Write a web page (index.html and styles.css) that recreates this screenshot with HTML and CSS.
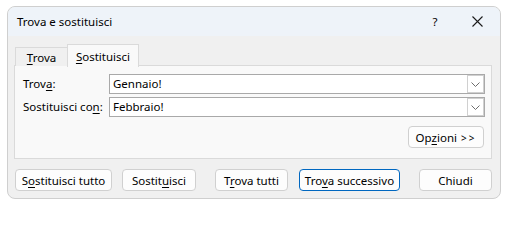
FILE: index.html
```html
<!DOCTYPE html>
<html lang="it">
<head>
<meta charset="utf-8">
<title>Trova e sostituisci</title>
<link rel="stylesheet" href="styles.css">
</head>
<body>
<div class="window">
  <div class="titlebar">
    <span class="title">Trova e sostituisci</span>
    <span class="help">?</span>
    <span class="close">
      <svg width="11" height="11" viewBox="0 0 11 11"><path d="M0.5 0.5 L10.5 10.5 M10.5 0.5 L0.5 10.5" stroke="#1b1b1b" stroke-width="1.1" fill="none"/></svg>
    </span>
  </div>
  <div class="content">
    <div class="tabs">
      <div class="tab"><span><u>T</u>rova</span></div>
      <div class="tab active"><span><u>S</u>ostituisci</span></div>
    </div>
    <div class="panel">
      <div class="form">
        <label class="label">Trov<u>a</u>:</label>
        <div class="combo"><span class="value">Gennaio!</span><span class="drop"><svg width="9" height="5" viewBox="0 0 9 5"><path d="M0.5 0.5 L4.5 4.5 L8.5 0.5" stroke="#6d6d6d" fill="none"/></svg></span></div>
        <label class="label">Sostituisci co<u>n</u>:</label>
        <div class="combo"><span class="value">Febbraio!</span><span class="drop"><svg width="9" height="5" viewBox="0 0 9 5"><path d="M0.5 0.5 L4.5 4.5 L8.5 0.5" stroke="#6d6d6d" fill="none"/></svg></span></div>
      </div>
      <div class="options-row">
        <button class="btn opt"><span>Op<u>z</u>ioni <span class="arrows">&gt;&gt;</span></span></button>
      </div>
    </div>
    <div class="buttons">
      <button class="btn b1"><span>S<u>o</u>stituisci tutto</span></button>
      <button class="btn b2"><span>Sostit<u>u</u>isci</span></button>
      <button class="btn b3"><span>T<u>r</u>ova tutti</span></button>
      <button class="btn b4 default"><span>Tro<u>v</u>a successivo</span></button>
      <button class="btn b5"><span>Chiudi</span></button>
    </div>
  </div>
</div>
</body>
</html>
```
FILE: styles.css
```css
* { box-sizing: border-box; }
html, body { margin: 0; padding: 0; background: #ffffff; }
body {
  font-family: "Segoe UI", "Noto Sans", "Open Sans", sans-serif;
  font-size: 11.5px;
  color: #000;
  padding: 6px 0 0 7px;
}
u { text-decoration-thickness: 1px; text-underline-offset: 2px; }
.window {
  width: 494px;
  height: 193px;
  border: 1px solid #cfcfcf;
  border-radius: 8px;
  overflow: hidden;
  background: #f0f0f0;
  display: flex;
  flex-direction: column;
}
.titlebar {
  height: 29px;
  background: #eef3f9;
  display: flex;
  align-items: center;
  padding-left: 9px;
}
.title { flex: 1; }
.help { width: 16px; margin-right: 29px; text-align: center; }
.close { width: 11px; height: 11px; margin-right: 17px; display: flex; }
.content {
  padding: 8px 8px 0 6px;
}
.tabs {
  display: flex;
  align-items: flex-end;
  padding-left: 1px;
  height: 22px;
  position: relative;
  z-index: 1;
}
.tab {
  height: 19px;
  width: 52px;
  border: 1px solid #dadada;
  border-bottom: none;
  border-right: none;
  background: #f0f0f0;
  display: flex;
  align-items: center;
  justify-content: center;
  padding-top: 1px;
}
.tab.active {
  height: 23px;
  width: 72px;
  background: #f9f9f9;
  border-right: 1px solid #dadada;
  margin-bottom: -1px;
  padding-top: 0;
}
.panel {
  background: #f9f9f9;
  border: 1px solid #dadada;
  height: 94px;
  padding: 8px 6px 0 8px;
  margin-top: -1px;
}
.form {
  display: grid;
  grid-template-columns: 86px 1fr;
  row-gap: 3px;
  align-items: center;
}
.label { line-height: 20px; }
.combo {
  height: 20px;
  border: 1px solid #a9a9a9;
  background: #fff;
  display: flex;
  align-items: stretch;
}
.value { flex: 1; padding-left: 3px; line-height: 18px; }
.drop {
  width: 17px;
  border: 1px solid #d0d0d0;
  display: flex;
  align-items: center;
  justify-content: center;
  background: #fff;
}
.options-row {
  display: flex;
  justify-content: flex-end;
  margin-top: 9px;
  padding-right: 1px;
}
.arrows { letter-spacing: 2px; font-size: 10px; margin-left: 1px; }
.btn {
  font: inherit;
  color: #000;
  height: 22px;
  border: 1px solid #d0d0d0;
  border-radius: 4px;
  background: #fdfdfd;
  padding: 0;
  display: flex;
  align-items: center;
  justify-content: center;
  white-space: nowrap;
}
.opt { width: 76px; }
.buttons {
  display: flex;
  margin-top: 10px;
  padding-left: 1px;
}
.b1 { width: 97px; }
.b2 { width: 74px; margin-left: 10px; }
.b3 { width: 73px; margin-left: 19px; }
.b4 { width: 101px; margin-left: 11px; }
.b5 { width: 73px; margin-left: 19px; }
.default { border-color: #0067c0; }
```
